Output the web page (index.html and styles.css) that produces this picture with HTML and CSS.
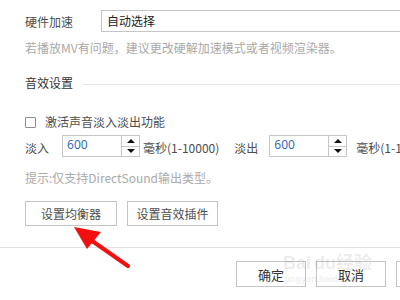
FILE: index.html
```html
<!DOCTYPE html>
<html lang="zh-CN">

<head>
    <meta charset="UTF-8">
    <title>音效设置</title>
    <link rel="stylesheet" href="styles.css">
</head>

<body>
    <div class="page">
        <div class="main">
            <div class="row first">
                <span class="label">硬件加速</span>
                <div class="select">自动选择</div>
            </div>
            <p class="hint">若播放MV有问题，建议更改硬解加速模式或者视频渲染器。</p>

            <div class="heading">
                <span>音效设置</span>
                <div class="rule"></div>
            </div>

            <label class="check">
                <span class="box"></span>
                <span>激活声音淡入淡出功能</span>
            </label>

            <div class="row fade">
                <span class="fade-label">淡入</span>
                <div class="spin">
                    <div class="spin-value">600</div>
                    <div class="spin-btns">
                        <span class="up"></span>
                        <span class="down"></span>
                    </div>
                </div>
                <span class="unit">毫秒(1-10000)</span>
                <span class="fade-label out">淡出</span>
                <div class="spin">
                    <div class="spin-value">600</div>
                    <div class="spin-btns">
                        <span class="up"></span>
                        <span class="down"></span>
                    </div>
                </div>
                <span class="unit second">毫秒(1-1</span>
            </div>
            <p class="hint small">提示:仅支持DirectSound输出类型。</p>

            <div class="actions">
                <button class="btn">设置均衡器</button>
                <button class="btn">设置音效插件</button>
            </div>
        </div>

        <div class="separator"></div>

        <div class="footer">
            <button class="btn foot">确定</button>
            <button class="btn foot">取消</button>
            <button class="btn foot"></button>
        </div>
    </div>

    <!-- baidu watermark -->
    <div class="watermark">
        <span class="wm-big">Bai<b>du</b>经验</span>
        <span class="wm-small">jingyan.baidu.com</span>
    </div>

    <!-- red arrow pointing at the equalizer button -->
    <svg class="arrow" width="400" height="300" viewBox="0 0 400 300">
        <line x1="128" y1="266" x2="88" y2="238" stroke="#f01010" stroke-width="4" stroke-linecap="round" />
        <polygon points="74,227 101,232 87,249" fill="#f01010" />
    </svg>
</body>

</html>
```

FILE: styles.css
```css
html,
body {
    margin: 0;
    width: 400px;
    height: 300px;
    overflow: hidden;
    background: #fff;
}

body {
    font-family: "Noto Sans CJK SC", "Noto Sans", sans-serif;
    font-size: 12px;
    color: #4d4d4d;
    position: relative;
}

.page {
    width: 400px;
    overflow: hidden;
}

.main {
    padding-left: 25px;
}

.row {
    display: flex;
    align-items: center;
    white-space: nowrap;
}

.first {
    margin-top: 10px;
    height: 22px;
}

.label {
    width: 76px;
    flex-shrink: 0;
}

.select {
    box-sizing: border-box;
    flex-shrink: 0;
    width: 320px;
    height: 22px;
    line-height: 20px;
    padding-left: 5px;
    border: 1px solid #c6c6c6;
    color: #222;
}

.hint {
    margin: 8px 0 0;
    line-height: 16px;
    color: #a9a9a9;
    white-space: nowrap;
}

.hint.small {
    margin-top: 13px;
}

.heading {
    display: flex;
    align-items: center;
    margin-top: 19px;
    line-height: 16px;
    color: #333;
}

.rule {
    flex: 1;
    height: 1px;
    margin: 3px 0 0 10px;
    background: #e8e8e8;
}

.check {
    display: flex;
    align-items: center;
    margin-top: 23px;
    line-height: 16px;
}

.box {
    box-sizing: border-box;
    width: 11px;
    height: 11px;
    margin-right: 9px;
    border: 1px solid #8c8c8c;
    border-radius: 1px;
}

.fade {
    margin-top: 5px;
    height: 22px;
}

.fade-label {
    margin-right: 13px;
    padding-top: 3px;
}

.fade-label.out {
    margin-left: 15px;
    margin-right: 11px;
}

.spin {
    display: flex;
    height: 22px;
    flex-shrink: 0;
}

.spin-value {
    box-sizing: border-box;
    width: 60px;
    height: 22px;
    padding-left: 4px;
    line-height: 18px;
    border: 1px solid #c6c6c6;
    color: #1f64b8;
    font-family: "Open Sans", "Noto Sans", sans-serif;
}

.spin-btns {
    box-sizing: border-box;
    width: 18px;
    height: 22px;
    border: 1px solid #c6c6c6;
    border-left: none;
    display: flex;
    flex-direction: column;
}

.spin-btns span {
    flex: 1;
    display: flex;
    align-items: center;
    justify-content: center;
}

.spin-btns .up {
    border-bottom: 1px solid #c6c6c6;
}

.spin-btns .up::before {
    content: "";
    border: 4px solid transparent;
    border-bottom: 4px solid #111;
    border-top: none;
}

.spin-btns .down::before {
    content: "";
    border: 4px solid transparent;
    border-top: 4px solid #111;
    border-bottom: none;
}

.unit {
    margin-left: 3px;
    padding-top: 2px;
}

.unit.second {
    margin-left: 9px;
}

.actions {
    display: flex;
    gap: 10px;
    margin-top: 15px;
}

.btn {
    box-sizing: border-box;
    height: 25px;
    padding: 0;
    background: #fff;
    border: 1px solid #c4c4c4;
    border-radius: 0;
    font-family: inherit;
    font-size: 12px;
    color: #4d4d4d;
    flex-shrink: 0;
}

.actions .btn {
    width: 92px;
}

.actions .btn + .btn {
    width: 91px;
}

.separator {
    height: 1px;
    margin-top: 21px;
    background: #e2e2e2;
}

.footer {
    display: flex;
    gap: 10px;
    margin-top: 13px;
    padding-left: 236px;
}

.btn.foot {
    width: 70px;
    height: 26px;
    color: #333;
    font-size: 13px;
}

.watermark {
    position: absolute;
    left: 283px;
    top: 252px;
    display: flex;
    flex-direction: column;
    align-items: flex-start;
    color: rgba(110, 110, 110, 0.13);
    font-family: "Liberation Sans", Arial, "Noto Sans CJK SC", sans-serif;
    pointer-events: none;
}

.wm-big {
    font-size: 18px;
    font-weight: bold;
    line-height: 22px;
}

.wm-big b {
    margin-left: 3px;
}

.wm-small {
    font-size: 9px;
    font-weight: bold;
    line-height: 10px;
    padding-left: 2px;
}

.arrow {
    position: absolute;
    left: 0;
    top: 0;
    pointer-events: none;
}
```
